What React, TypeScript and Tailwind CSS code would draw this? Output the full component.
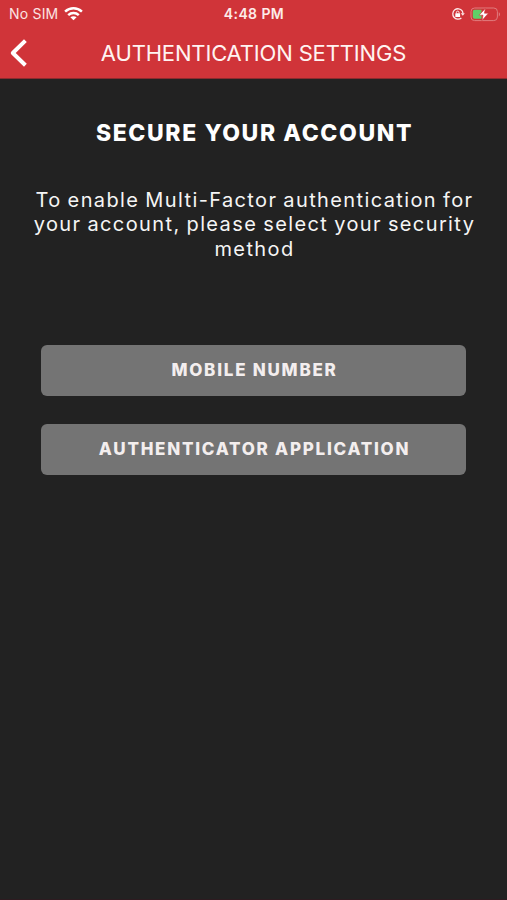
function Wifi() {
  return (
    <svg width="19" height="15" viewBox="0 0 19 15" fill="none" stroke="#fff" strokeWidth="2.5">
      <path d="M1.1 4.6C5.9 .2 13.1 .2 17.9 4.6" />
      <path d="M4.2 8.1C7.2 5.3 11.8 5.3 14.8 8.1" />
      <path d="M9.5 13.2L6.4 10.3C8.2 8.8 10.8 8.8 12.6 10.3Z" fill="#fff" stroke="none" />
    </svg>
  );
}

function RotationLock() {
  return (
    <svg width="14" height="14" viewBox="0 0 14 14" fill="none" stroke="#fde8e8">
      <path d="M11.2 3.9A5.2 5.2 0 1 0 10.4 10.9M11.2 3.9A5.2 5.2 0 0 1 11.9 6.5" strokeWidth="1.3" />
      <path d="M9.8 6.2H13.8L11.8 8.8Z" fill="#fde8e8" stroke="none" />
      <rect x="4.3" y="6.2" width="4.8" height="3.8" rx="0.5" fill="#fff" stroke="none" />
      <path d="M5.4 6.5V5.4a1.3 1.3 0 0 1 2.6 0V6.5" strokeWidth="1" />
    </svg>
  );
}

function Battery() {
  return (
    <svg width="31" height="15" viewBox="0 0 31 15" fill="none">
      <rect x="1" y="1" width="26.4" height="12.6" rx="3.6" stroke="#e07c7e" strokeWidth="1" />
      <path d="M28.8 5.2C30.4 5.8 30.4 8.8 28.8 9.4Z" fill="#e07c7e" />
      <path d="M4.6 2.8H11.5V11.8H4.6A1.8 1.8 0 0 1 2.8 10V4.6A1.8 1.8 0 0 1 4.6 2.8Z" fill="#5fd068" />
      <path d="M15.4 1.4L9 8.2H13L12 13.6L18.4 6.2H14.4Z" fill="#fff" stroke="#d13438" strokeWidth="0.6" />
    </svg>
  );
}

export default function App() {
  return (
    <div className="flex h-[900px] w-[507px] flex-col overflow-hidden border-b border-[#2e1b20] bg-[#222222] font-['Inter','Liberation_Sans',sans-serif] text-white">
      <header className="h-[79px] border-b border-[#8b2b2e] bg-[#d03439]">
        <div className="grid h-7 grid-cols-3 items-center pl-[9px] pr-[8px]">
          <div className="flex items-center gap-[6px]">
            <span className="whitespace-nowrap text-[14px] leading-7 tracking-[0.2px] text-[#fbe3e2]">No SIM</span>
            <Wifi />
          </div>
          <span className="whitespace-nowrap text-center text-[14px] font-semibold leading-7 tracking-[0.4px] text-[#fdecea]">4:48 PM</span>
          <div className="-mr-[2px] flex items-center justify-end gap-[5px]">
            <RotationLock />
            <Battery />
          </div>
        </div>
        <div className="flex h-[50px] items-center pl-[9px]">
          <button aria-label="Back" className="h-[28px] w-[20px]">
            <svg width="20" height="28" viewBox="0 0 20 28" fill="none" stroke="#fff" strokeWidth="4" strokeLinejoin="round">
              <path d="M16.4 1.6L3.8 14L16.4 26.2" />
            </svg>
          </button>
          <h1 className="w-[449px] whitespace-nowrap text-center text-[22px] leading-[50px] tracking-[-0.16px] text-[#fff3f1]">
            AUTHENTICATION SETTINGS
          </h1>
        </div>
      </header>
      <main className="flex flex-col px-[41px] pt-[38px]">
        <h2 className="whitespace-nowrap pl-[2px] text-center text-[23px] font-extrabold leading-8 tracking-[1.6px]">SECURE YOUR ACCOUNT</h2>
        <p className="-mx-5 mt-[39px] whitespace-nowrap pl-[2px] text-center text-[20px] leading-[24.4px] tracking-[1.38px] [word-spacing:-1px] text-[#f5f5f5]">
          To enable Multi-Factor authentication for
          <br />
          your account, please select your security
          <br />
          method
        </p>
        <button className="mt-[84px] h-[51px] rounded-[6px] bg-[#747474] pl-[2px] text-[17px] font-extrabold tracking-[1.75px] text-[#f3eeee]">
          MOBILE NUMBER
        </button>
        <button className="mt-7 h-[51px] rounded-[6px] bg-[#747474] pl-[2px] text-[17px] font-extrabold tracking-[1.75px] text-[#f3eeee]">
          AUTHENTICATOR APPLICATION
        </button>
      </main>
    </div>
  );
}
